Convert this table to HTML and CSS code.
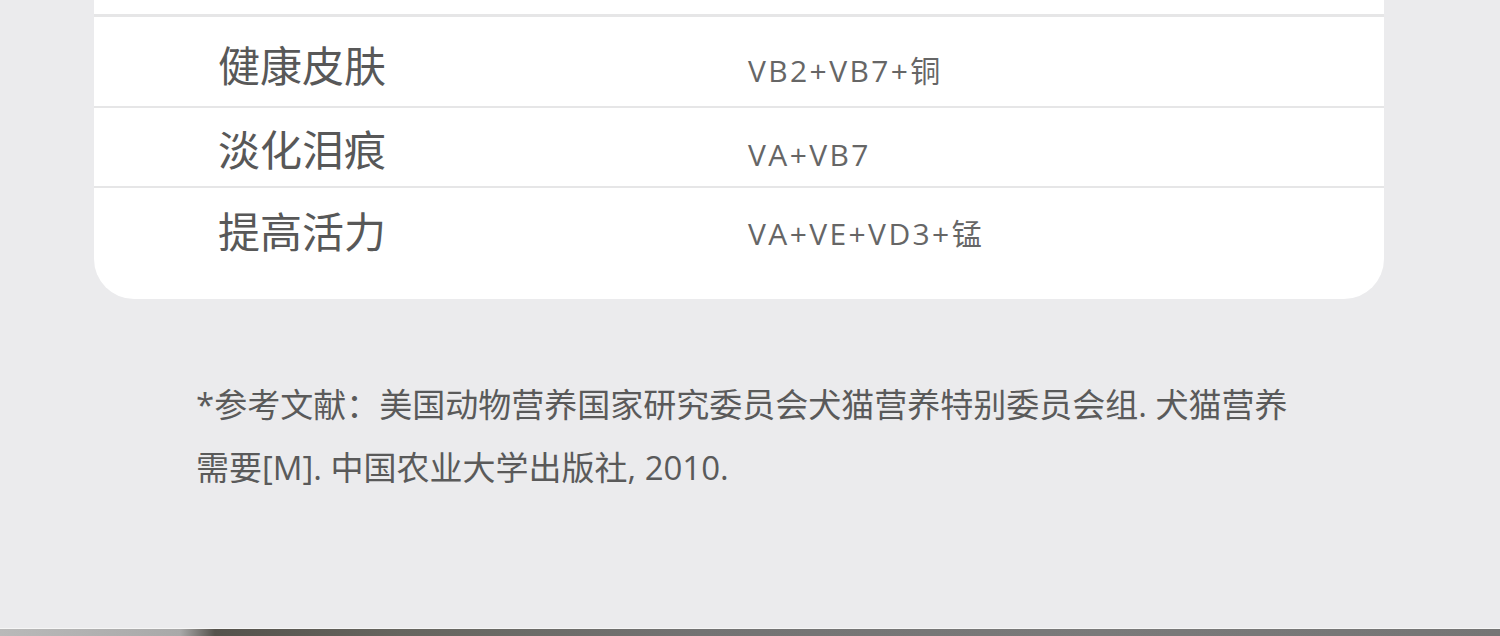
FILE: index.html
```html
<!DOCTYPE html>
<html lang="zh-CN">
<head>
    <meta charset="UTF-8">
    <meta name="viewport" content="width=device-width, initial-scale=1.0">
    <title>营养功效</title>
    <link rel="stylesheet" href="styles.css">
</head>
<body>
    <div class="page">
        <div class="card">
            <div class="row row-cut"></div>
            <div class="row row-1">
                <div class="name">健康皮肤</div>
                <div class="value">VB2+VB7+铜</div>
            </div>
            <div class="row row-2">
                <div class="name">淡化泪痕</div>
                <div class="value">VA+VB7</div>
            </div>
            <div class="row row-3">
                <div class="name">提高活力</div>
                <div class="value">VA+VE+VD3+锰</div>
            </div>
        </div>

        <p class="note">*参考文献：美国动物营养国家研究委员会犬猫营养特别委员会组. 犬猫营养<br>需要[M]. 中国农业大学出版社, 2010.</p>

        <div class="bottom-bar"></div>
    </div>
</body>
</html>
```

FILE: styles.css
```css
body {
    margin: 0;
    background: #ebebed;
    font-family: "Open Sans", "Noto Sans CJK SC", sans-serif;
    overflow: hidden;
}
.page {
    display: flex;
    flex-direction: column;
    height: 100vh;
}
.card {
    margin-left: 94px;
    width: 1290px;
    background: #fff;
    border-radius: 0 0 40px 40px;
    padding-bottom: 17px;
}
.row {
    display: flex;
    align-items: center;
    padding-left: 124px;
    border-bottom: 3px solid #e6e6e7;
}
.row-cut {
    height: 14px;
}
.row-1 {
    height: 72px;
    padding-top: 13px;
    padding-bottom: 4px;
    border-bottom-width: 2px;
}
.row-2 {
    height: 64px;
    padding-top: 10px;
    padding-bottom: 4px;
    border-bottom-width: 2px;
}
.row-3 {
    height: 88px;
    padding-bottom: 6px;
    border-bottom: none;
}
.name {
    width: 530px;
    font-size: 42px;
    color: #585858;
    line-height: 1;
}
.value {
    font-size: 30px;
    letter-spacing: 2.4px;
    color: #666;
    line-height: 1;
    padding-top: 9px;
}
.row-3 .value {
    padding-top: 3px;
}
.note {
    margin: 74px 0 0 196px;
    font-size: 33px;
    line-height: 63px;
    color: #5a5a5a;
}
.bottom-bar {
    margin-top: auto;
    height: 7px;
    border-top: 1px solid #f6f6f6;
    background: linear-gradient(90deg, #b9b9b9 0, #a9a9a9 180px, #55524c 215px, #66655f 400px, #737373 700px, #7a7a7a 1100px, #757575 100%);
}
```
